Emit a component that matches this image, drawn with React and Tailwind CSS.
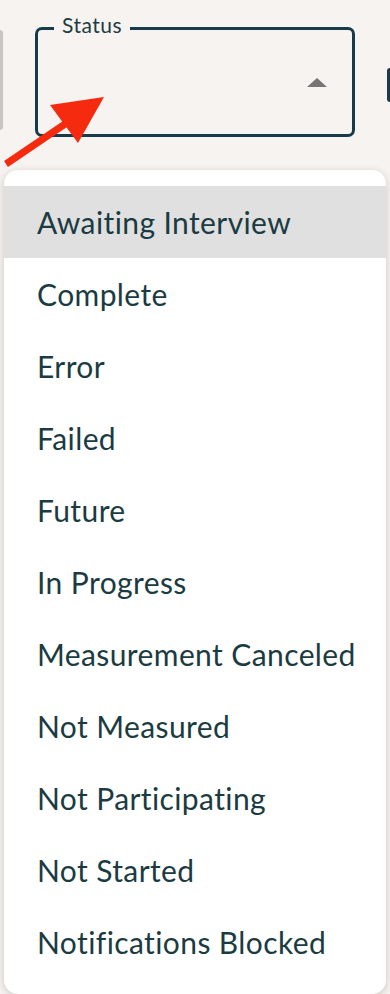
const statuses = [
  "Awaiting Interview",
  "Complete",
  "Error",
  "Failed",
  "Future",
  "In Progress",
  "Measurement Canceled",
  "Not Measured",
  "Not Participating",
  "Not Started",
  "Notifications Blocked",
];

function Arrow() {
  return (
    <svg className="absolute left-0 top-0 pointer-events-none" width="140" height="180" viewBox="0 0 140 180">
      <line x1="6" y1="164" x2="68" y2="122" stroke="#f52a0f" strokeWidth="7" />
      <polygon points="104,97 50,105 78,143" fill="#f52a0f" />
    </svg>
  );
}

export default function App() {
  return (
    <div className="relative h-[994px] w-[390px] overflow-hidden bg-[#f6f3f0] font-['Lato','Noto_Sans',sans-serif]">
      {/* bits of the page behind the menu */}
      <div className="absolute left-0 top-[30px] h-[100px] w-[3px] rounded-r bg-[#c9c6c3]" />
      <div className="absolute right-0 top-[68px] h-[34px] w-[3px] rounded-l bg-[#1d3a48]" />

      <div className="flex flex-col px-[4px] pt-[27px]">
        <div className="mx-[31px] relative h-[110px] rounded-[7px] border-[3px] border-[#183b4b]">
          <span className="absolute left-[16px] -top-[17px] bg-[#f6f3f0] px-[8px] text-[21px] leading-[24px] tracking-[0.5px] text-[#1e3b44]">
            Status
          </span>
          <div className="flex h-full items-center justify-end pr-[25px]">
            <div className="h-0 w-0 border-x-[10px] border-b-[9px] border-x-transparent border-b-[#767574]" />
          </div>
        </div>

        <ul className="mt-[33px] rounded-[14px] bg-white py-[16px] shadow-[0_2px_8px_rgba(0,0,0,0.18)]">
          {statuses.map((s, i) => (
            <li
              key={s}
              className={
                i === 0
                  ? "flex h-[72px] items-center bg-[#e0e0e0] pl-[33px] text-[30px] tracking-[0.4px] text-[#1b3b42]"
                  : "flex h-[72px] items-center pl-[33px] text-[30px] tracking-[0.4px] text-[#1b3b42]"
              }
            >
              {s}
            </li>
          ))}
        </ul>
      </div>

      <Arrow />
    </div>
  );
}
